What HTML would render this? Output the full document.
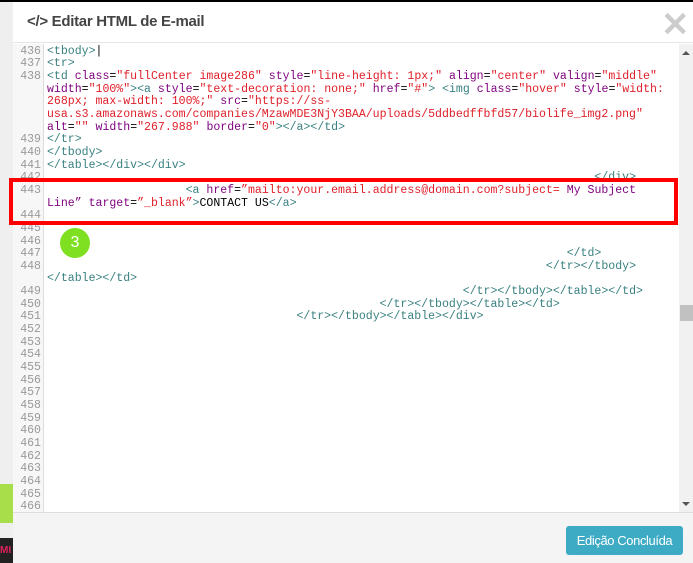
<!DOCTYPE html>
<html><head><meta charset="utf-8"><style>
*{margin:0;padding:0;box-sizing:border-box}
body{width:693px;height:563px;overflow:hidden;background:#000;position:relative;font-family:"Liberation Sans",sans-serif}
.bgl{position:absolute;left:0;top:2px;width:13px;height:561px;background:#efefef}
.modal{position:absolute;left:13px;top:2px;width:680px;height:561px;background:#fff}
.hdr{position:absolute;left:0;top:0;width:680px;height:41px;border-bottom:1px solid #e5e5e5;background:#fff}
.title{position:absolute;left:14px;top:11px;font-size:15px;font-weight:bold;color:#444;letter-spacing:-0.3px}
.x{position:absolute;left:648px;top:5px;font-size:34px;color:#ccc;font-weight:bold;line-height:36px}
.ed{position:absolute;left:0;top:42px;width:666px;height:468px;overflow:hidden;background:#fff}
.gut{position:absolute;left:0;top:0;width:31px;height:468px;background:#f7f7f7;border-right:1px solid #ddd}
pre{position:absolute;top:-11px;font-family:"Liberation Mono",monospace;font-size:11.55px;line-height:12.65px;white-space:pre}
.ln{left:0;width:30px;text-align:right;color:#999;padding-right:2px}
.code{left:34px;color:#000}
.t{color:#3a8080}.a{color:#7f007f}.v{color:#e0202a}
.sb{position:absolute;left:666px;top:42px;width:14px;height:468px;background:#f1f1f1}
.th{position:absolute;left:1px;top:261px;width:13px;height:16px;background:#c1c1c1}
.ft{position:absolute;left:0;top:510px;width:680px;height:51px;background:#f4f4f4;border-top:1px solid #ddd}
.btn{position:absolute;left:553px;top:13px;width:117px;height:29px;background:#3eabc5;border-radius:3px;color:#fff;font-size:13px;text-align:center;line-height:29px;letter-spacing:-0.4px}
.red{position:absolute;left:9px;top:178px;width:669px;height:47px;border:4px solid #f00}
.circ{position:absolute;left:60px;top:228px;width:30px;height:30px;border-radius:50%;background:#7fe021;color:#fff;font-size:16px;text-align:center;line-height:30px}
</style></head><body>
<div style="position:absolute;left:0;top:0;width:693px;height:2px;background:#000"></div>
<div class="bgl"><div style="position:absolute;left:0;top:482px;width:13px;height:39px;background:#a8de4a"></div><div style="position:absolute;left:0;top:536px;width:13px;height:25px;background:#222"></div><div style="position:absolute;left:0;top:543px;font-size:10px;color:#e0205a;font-weight:bold">MI</div></div>
<div class="modal">
<div class="hdr"><div class="title">&lt;/&gt; Editar HTML de E-mail</div><div class="x">✕</div></div>
<div class="ed">
<div class="gut"></div>
<pre class="ln">435
436
437
438




439
440
441
442
443

444
445
446
447
448

449
450
451
452
453
454
455
456
457
458
459
460
461
462
463
464
465
466</pre>
<pre class="code"><span class="a">  p        g         p      g         g</span>
<span class="t">&lt;tbody&gt;</span>|
<span class="t">&lt;tr&gt;</span>
<span class="t">&lt;td</span> <span class="a">class</span>=<span class="v">"fullCenter image286"</span> <span class="a">style</span>=<span class="v">"line-height: 1px;"</span> <span class="a">align</span>=<span class="v">"center"</span> <span class="a">valign</span>=<span class="v">"middle"</span>
<span class="a">width</span>=<span class="v">"100%"</span><span class="t">&gt;&lt;a</span> <span class="a">style</span>=<span class="v">"text-decoration: none;"</span> <span class="a">href</span>=<span class="v">"#"</span><span class="t">&gt;</span> <span class="t">&lt;img</span> <span class="a">class</span>=<span class="v">"hover"</span> <span class="a">style</span>=<span class="v">"width:</span>
<span class="v">268px; max-width: 100%;"</span> <span class="a">src</span>=<span class="v">"https://ss-</span>
<span class="v">usa.s3.amazonaws.com/companies/MzawMDE3NjY3BAA/uploads/5ddbedffbfd57/biolife_img2.png"</span>
<span class="a">alt</span>=<span class="v">""</span> <span class="a">width</span>=<span class="v">"267.988"</span> <span class="a">border</span>=<span class="v">"0"</span><span class="t">&gt;&lt;/a&gt;&lt;/td&gt;</span>
<span class="t">&lt;/tr&gt;</span>
<span class="t">&lt;/tbody&gt;</span>
<span class="t">&lt;/table&gt;&lt;/div&gt;&lt;/div&gt;</span>
                                                                               <span class="t">&lt;/div&gt;</span>
                    <span class="t">&lt;a</span> <span class="a">href</span>=<span class="v">”mailto:your.email.address@domain.com?subject=</span> <span class="a">My Subject</span>
<span class="a">Line”</span> <span class="a">target</span>=<span class="v">”_blank”</span><span class="t">&gt;</span>CONTACT US<span class="t">&lt;/a&gt;</span>



                                                                           <span class="t">&lt;/td&gt;</span>
                                                                        <span class="t">&lt;/tr&gt;&lt;/tbody&gt;</span>
<span class="t">&lt;/table&gt;&lt;/td&gt;</span>
                                                            <span class="t">&lt;/tr&gt;&lt;/tbody&gt;&lt;/table&gt;&lt;/td&gt;</span>
                                                <span class="t">&lt;/tr&gt;&lt;/tbody&gt;&lt;/table&gt;&lt;/td&gt;</span>
                                    <span class="t">&lt;/tr&gt;&lt;/tbody&gt;&lt;/table&gt;&lt;/div&gt;</span></pre>
</div>
<div class="sb"><div style="position:absolute;left:3px;top:7px;width:0;height:0;border-left:4px solid transparent;border-right:4px solid transparent;border-bottom:4px solid #555"></div><div class="th"></div><div style="position:absolute;left:3px;top:458px;width:0;height:0;border-left:4px solid transparent;border-right:4px solid transparent;border-top:4px solid #555"></div></div>
<div class="ft"><div class="btn">Edição Concluída</div></div>
</div>
<div class="red"></div>
<div class="circ">3</div>
</body></html>
